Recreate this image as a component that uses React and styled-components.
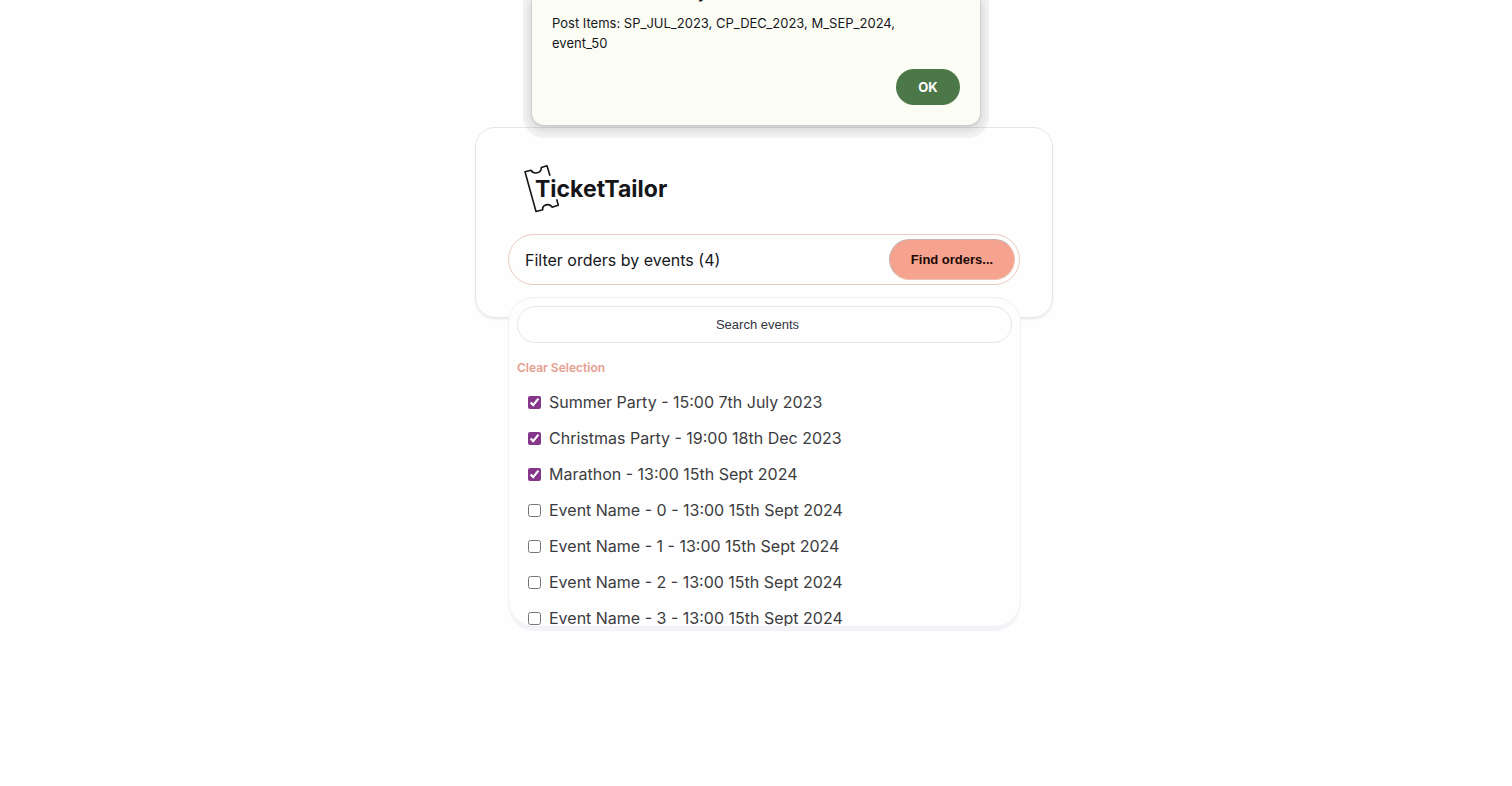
import React, { useState } from "react";
import styled, { createGlobalStyle } from "styled-components";

const GlobalStyle = createGlobalStyle`
  *, *::before, *::after { box-sizing: border-box; }
  body {
    margin: 0;
    background: #fefefe;
    color: #16161d;
    font-family: Inter, "Liberation Sans", sans-serif;
    font-size: 16px;
  }
  button, input { font-family: inherit; }
`;

const Page = styled.main`
  display: flex;
  justify-content: center;
  align-items: flex-start;
  min-height: 100vh;
  padding: 127px 0 0 16px;
`;

const Card = styled.section`
  width: 100%;
  max-width: 578px;
  padding: 36px 32px 32px;
  border: 1px solid #e6e6e9;
  border-radius: 20px;
  background: #fefefe;
  box-shadow: 0 2px 2px #f1f1f4;
`;

const LogoLink = styled.a`
  display: block;
  width: 152px;
  height: 50px;
  margin: 0 0 20px 12px;
  color: #16161a;
`;

const LogoText = styled.text`
  font-family: Inter, sans-serif;
  font-size: 23px;
  font-weight: 700;
`;

const Picker = styled.div`
  position: relative;
`;

const FilterBar = styled.div`
  display: flex;
  height: 51px;
  padding: 4px;
  border: 1px solid #ecc9c2;
  border-radius: 26px;
`;

const FilterTrigger = styled.button`
  flex: 1;
  padding: 0 12px;
  border: 0;
  background: none;
  color: #16161d;
  font-size: 16px;
  text-align: left;
`;

const FindButton = styled.button`
  width: 126px;
  border: 1px solid #f0c0b4;
  border-top-color: #c3b4b1;
  border-left-color: #c3b4b1;
  border-radius: 21px;
  background: #f5a38e;
  color: #210805;
  font-family: "Liberation Sans", Arial, sans-serif;
  font-size: 13px;
  font-weight: 700;
`;

const Menu = styled.div`
  position: absolute;
  top: calc(100% + 12px);
  left: 0;
  right: -1px;
  height: 330px;
  padding: 8px;
  overflow: hidden;
  border: 1px solid #f1f1f3;
  border-radius: 26px;
  background: #fefefe;
  box-shadow: 0 5px 1px -1px #f4f4f8;
`;

const SearchInput = styled.input`
  display: block;
  width: 100%;
  height: 37px;
  padding: 0 30px 0 16px;
  border: 1px solid #e5e5e8;
  border-radius: 19px;
  background: #fefefe;
  font-family: "Liberation Sans", Arial, sans-serif;
  font-size: 13px;
  text-align: center;
  &::placeholder { color: #34343e; opacity: 1; }
`;

const ClearButton = styled.button`
  display: block;
  margin: 17px 0 8px;
  padding: 0;
  border: 0;
  background: none;
  color: #e5a090;
  font-size: 12px;
  font-weight: 600;
  line-height: 16px;
`;

const EventList = styled.ul`
  margin: 0;
  padding: 0;
  list-style: none;
`;

const EventRow = styled.label`
  display: flex;
  align-items: center;
  gap: 8px;
  height: 36px;
  padding: 0 11px;
  color: #3c3c40;
  white-space: nowrap;
`;

const Tick = styled.input`
  width: 13px;
  height: 13px;
  margin: 0;
  accent-color: #83368a;
`;

const Alert = styled.div`
  position: absolute;
  top: 0;
  left: 50%;
  width: 448px;
  height: 125px;
  transform: translateX(-50%);
  display: flex;
  flex-direction: column;
  justify-content: flex-end;
  padding: 20px;
  border-radius: 0 0 12px 12px;
  background: #fbfdf4;
  box-shadow: 0 0 2px #a8a8a8, 0 3px 8px 1px rgba(0, 0, 0, 0.14), 0 4px 1px 9px rgba(0, 0, 0, 0.05);
`;

const AlertTitle = styled.h2`
  margin: 0 0 11px;
  font-size: 17px;
  font-weight: 500;
  line-height: 20px;
`;

const AlertText = styled.p`
  margin: 0 0 16px;
  padding-right: 16px;
  font-size: 13px;
  line-height: 20px;
`;

const OkButton = styled.button`
  align-self: flex-end;
  flex: none;
  width: 64px;
  height: 36px;
  border: 0;
  border-radius: 18px;
  background: #4c7748;
  color: #fff;
  font-size: 13px;
  font-weight: 700;
`;

const EVENTS = [
  { id: "SP_JUL_2023", name: "Summer Party - 15:00 7th July 2023", picked: true },
  { id: "CP_DEC_2023", name: "Christmas Party - 19:00 18th Dec 2023", picked: true },
  { id: "M_SEP_2024", name: "Marathon - 13:00 15th Sept 2024", picked: true },
  { id: "event_0", name: "Event Name - 0 - 13:00 15th Sept 2024" },
  { id: "event_1", name: "Event Name - 1 - 13:00 15th Sept 2024" },
  { id: "event_2", name: "Event Name - 2 - 13:00 15th Sept 2024" },
  { id: "event_3", name: "Event Name - 3 - 13:00 15th Sept 2024" },
];

function Logo() {
  return (
    <LogoLink href="#" aria-label="TicketTailor">
      <svg width="152" height="50" viewBox="0 0 152 50">
        <path
          d="M30 11.8 27 1.8 21.3 3.5C21.5 9.3 13.5 11 11 6.2L5 7.8 16 47.5l6.7-1.7C21.8 40.8 29.5 38.5 32 43.2l6.3-2-1.6-6"
          fill="none"
          stroke="currentColor"
          strokeWidth="1.6"
          strokeLinejoin="round"
        />
        <LogoText x="15" y="33" fill="currentColor">TicketTailor</LogoText>
      </svg>
    </LogoLink>
  );
}

export default function App() {
  const [picked, setPicked] = useState(
    () => new Set(["event_50", ...EVENTS.filter((e) => e.picked).map((e) => e.id)])
  );
  const toggle = (id) =>
    setPicked((old) => {
      const next = new Set(old);
      if (!next.delete(id)) next.add(id);
      return next;
    });

  return (
    <>
      <GlobalStyle />
      <Page>
        <Card>
          <Logo />
          <Picker>
            <FilterBar>
              <FilterTrigger type="button">Filter orders by events ({picked.size})</FilterTrigger>
              <FindButton type="button">Find orders...</FindButton>
            </FilterBar>
            <Menu>
              <SearchInput type="text" placeholder="Search events" aria-label="Search events" />
              <ClearButton type="button" onClick={() => setPicked(new Set())}>
                Clear Selection
              </ClearButton>
              <EventList>
                {EVENTS.map((e) => (
                  <li key={e.id}>
                    <EventRow>
                      <Tick type="checkbox" checked={picked.has(e.id)} onChange={() => toggle(e.id)} />
                      {e.name}
                    </EventRow>
                  </li>
                ))}
              </EventList>
            </Menu>
          </Picker>
        </Card>
      </Page>
      <Alert role="alertdialog" aria-label="Post Items">
        <AlertTitle>localhost:3000 says</AlertTitle>
        <AlertText>Post Items: SP_JUL_2023, CP_DEC_2023, M_SEP_2024, event_50</AlertText>
        <OkButton type="button">OK</OkButton>
      </Alert>
    </>
  );
}
